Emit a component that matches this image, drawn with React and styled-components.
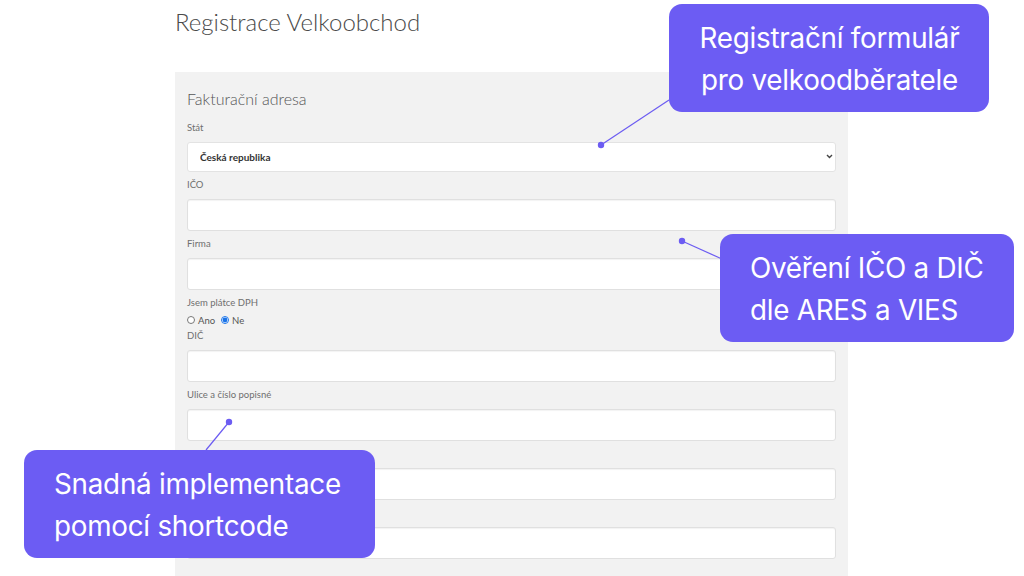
import React from "react";
import styled, { createGlobalStyle } from "styled-components";

const GlobalStyle = createGlobalStyle`
  html, body {
    margin: 0;
    padding: 0;
    background: #ffffff;
  }
  body {
    font-family: "Lato", "Open Sans", sans-serif;
    overflow: hidden;
  }
`;

const fields = [{ label: "IČO" }, { label: "Firma" }];

// the last two labels sit under the callout and are not readable
const fieldsAfter = [
  { id: "dic", label: "DIČ" },
  { id: "ulice", label: "Ulice a číslo popisné" },
  { id: "hidden1", label: "\u00a0" },
  { id: "hidden2", label: "\u00a0" },
];

const callouts = [
  {
    id: "form",
    lines: ["Registrační formulář", "pro velkoodběratele"],
    box: { left: 669, top: 4, width: 320 },
    align: "center",
  },
  {
    id: "ares",
    lines: ["Ověření IČO a DIČ", "dle ARES a VIES"],
    box: { left: 720, top: 234, width: 294 },
    align: "left",
  },
  {
    id: "shortcode",
    lines: ["Snadná implementace", "pomocí shortcode"],
    box: { left: 24, top: 450, width: 351 },
    align: "left",
  },
];

const connectors = [
  { x1: 601, y1: 145, x2: 669, y2: 100 },
  { x1: 682, y1: 241, x2: 722, y2: 259 },
  { x1: 229, y1: 422, x2: 206, y2: 450 },
];

const Chevron = () => (
  <svg width="7" height="5" viewBox="0 0 7 5">
    <path d="M1 1 L3.5 3.5 L6 1" fill="none" stroke="#444" strokeWidth="1.4" />
  </svg>
);

const App = () => {
  return (
    <Page>
      <GlobalStyle />
      <Content>
        <Title>Registrace Velkoobchod</Title>
        <Panel>
          <PanelTitle>Fakturační adresa</PanelTitle>
          <Field>
            <Label>Stát</Label>
            <SelectWrap>
              <Select defaultValue="cz">
                <option value="cz">Česká republika</option>
              </Select>
              <SelectArrow>
                <Chevron />
              </SelectArrow>
            </SelectWrap>
          </Field>
          {fields.map((f) => (
            <Field key={f.label}>
              <Label>{f.label}</Label>
              <Input type="text" />
            </Field>
          ))}
          <VatGroup>
            <VatLabel>Jsem plátce DPH</VatLabel>
            <RadioRow>
              <RadioOption>
                <Radio type="radio" name="dph" readOnly />
                Ano
              </RadioOption>
              <RadioOption>
                <Radio type="radio" name="dph" defaultChecked />
                Ne
              </RadioOption>
            </RadioRow>
          </VatGroup>
          {fieldsAfter.map((f) => (
            <Field key={f.id}>
              <Label>{f.label}</Label>
              <Input type="text" />
            </Field>
          ))}
        </Panel>
      </Content>

      <Lines width="1024" height="576" viewBox="0 0 1024 576">
        {connectors.map((c, i) => (
          <g key={i}>
            <line
              x1={c.x1}
              y1={c.y1}
              x2={c.x2}
              y2={c.y2}
              stroke="#6c5cf2"
              strokeWidth="1.2"
            />
            <circle cx={c.x1} cy={c.y1} r="3.2" fill="#6c5cf2" />
          </g>
        ))}
      </Lines>

      {callouts.map((c) => (
        <Callout
          key={c.id}
          $align={c.align}
          style={{ left: c.box.left, top: c.box.top, width: c.box.width }}
        >
          {c.lines.map((l) => (
            <CalloutLine key={l}>{l}</CalloutLine>
          ))}
        </Callout>
      ))}
    </Page>
  );
};

const Page = styled.div`
  position: relative;
  width: 1024px;
  height: 576px;
  overflow: hidden;
  background: #ffffff;
`;

const Content = styled.div`
  padding-left: 175px;
  width: 673px;
`;

const Title = styled.h1`
  margin: 0;
  padding-top: 7px;
  height: 72px;
  box-sizing: border-box;
  font-family: "Lato", sans-serif;
  font-weight: 300;
  font-size: 24px;
  line-height: 30px;
  color: #4a4a4a;
`;

const Panel = styled.div`
  background: #f2f2f2;
  padding: 16px 12px 40px 12px;
  min-height: 520px;
`;

const PanelTitle = styled.h2`
  margin: 0 0 11px 0;
  font-family: "Lato", sans-serif;
  font-weight: 300;
  font-size: 16px;
  line-height: 22px;
  color: #555;
`;

const Field = styled.div`
  display: flex;
  flex-direction: column;
  margin-bottom: 6px;
`;

const Label = styled.label`
  font-family: "Lato", sans-serif;
  font-size: 9.5px;
  line-height: 14px;
  color: #6f6f6f;
  margin-bottom: 7px;
`;

const Input = styled.input`
  box-sizing: border-box;
  height: 32px;
  width: 100%;
  margin: 0;
  background: #ffffff;
  border: 1px solid #e0e0e0;
  border-radius: 3px;
  box-shadow: inset 0 1px 1px rgba(0, 0, 0, 0.05);
  outline: none;
`;

const SelectWrap = styled.div`
  position: relative;
  height: 30px;
`;

const Select = styled.select`
  box-sizing: border-box;
  appearance: none;
  height: 30px;
  width: 100%;
  margin: 0;
  background: #ffffff;
  border: 1px solid #e3e3e3;
  border-radius: 3px;
  padding: 0 12px;
  font-family: "Lato", sans-serif;
  font-size: 10px;
  font-weight: 700;
  color: #333;
  outline: none;
`;

const SelectArrow = styled.span`
  position: absolute;
  right: 3px;
  top: 12px;
  display: flex;
  pointer-events: none;
`;

const VatGroup = styled.div`
  display: flex;
  flex-direction: column;
  margin-bottom: 1px;
`;

const VatLabel = styled(Label)`
  margin-bottom: 2px;
`;

const RadioRow = styled.div`
  display: flex;
  align-items: center;
  gap: 6px;
  height: 16px;
`;

const RadioOption = styled.label`
  display: flex;
  align-items: center;
  gap: 3px;
  font-family: "Lato", sans-serif;
  font-size: 9.5px;
  color: #555;
`;

const Radio = styled.input`
  margin: 0;
  width: 8px;
  height: 8px;
  accent-color: #1a73e8;
`;

const Lines = styled.svg`
  position: absolute;
  left: 0;
  top: 0;
  pointer-events: none;
`;

const Callout = styled.div`
  position: absolute;
  box-sizing: border-box;
  height: 108px;
  padding: 13px 29px 0 30px;
  background: #6c5cf3;
  border-radius: 13px;
  color: #ffffff;
  text-align: ${(p) => p.$align};
  font-family: "Inter", "Noto Sans", sans-serif;
  font-size: 27.8px;
  line-height: 42px;
  letter-spacing: -0.25px;
`;

const CalloutLine = styled.div`
  white-space: nowrap;
`;

export default App;
